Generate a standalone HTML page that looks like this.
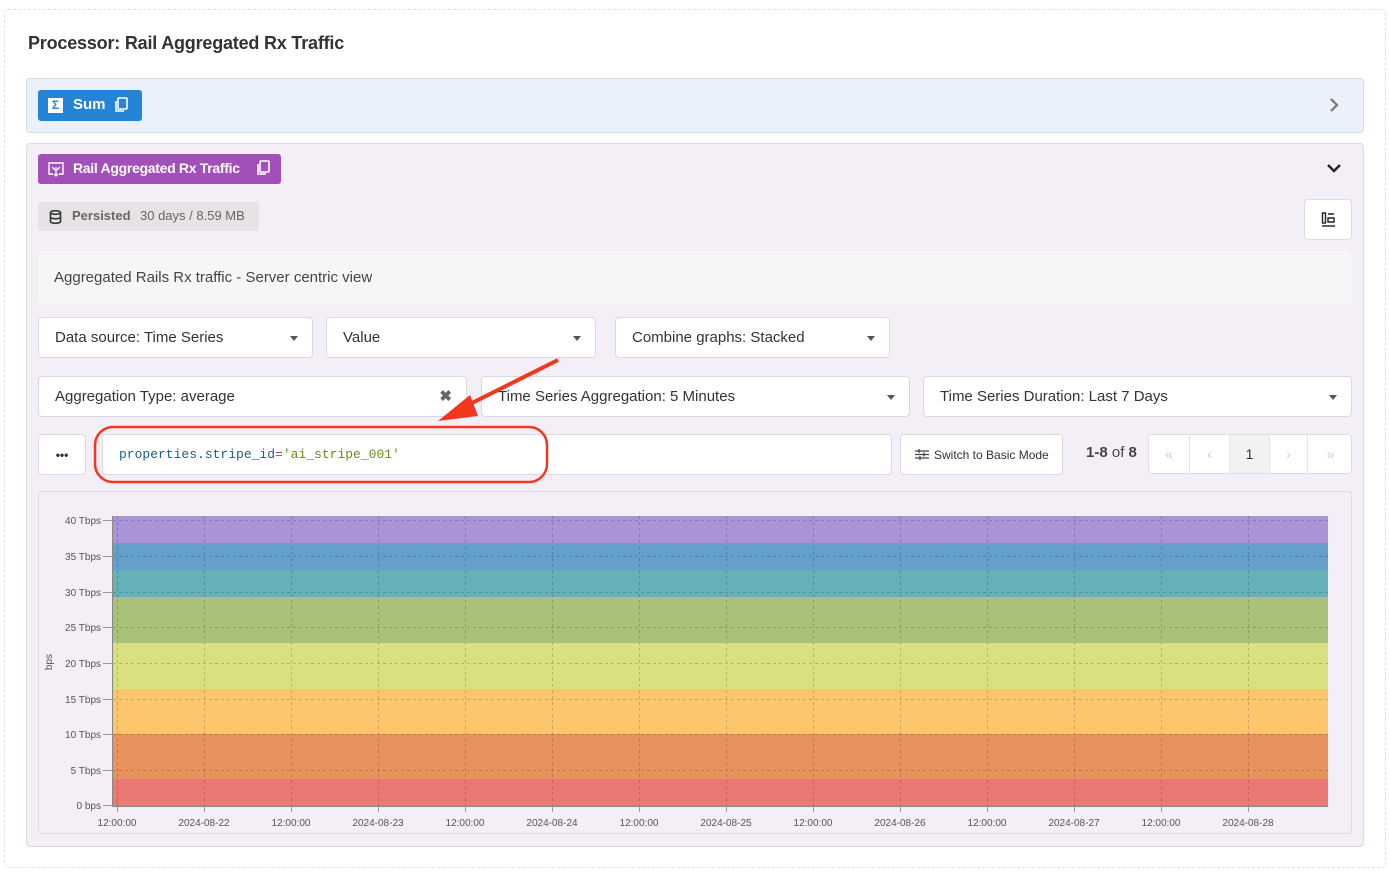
<!DOCTYPE html>
<html><head><meta charset="utf-8">
<style>
*{box-sizing:border-box;margin:0;padding:0}
body{width:1390px;height:876px;background:#fff;font-family:"Liberation Sans",sans-serif;color:#333;position:relative;overflow:hidden}
.a{position:absolute}
.box{position:absolute;background:#fff;border:1px solid #dcd8e0;border-radius:4px;font-size:15px;color:#333;display:flex;align-items:center;padding-left:16px}
.caret{position:absolute;right:14px;top:50%;margin-top:-2px;width:0;height:0;border-left:4px solid transparent;border-right:4px solid transparent;border-top:5px solid #555}
.pg{position:absolute;top:0;height:38px;border-right:1px solid #e5e5e5;display:flex;align-items:center;justify-content:center;color:#ccc;font-size:14px}
</style></head><body>
<div class="a" style="left:4px;top:9px;width:1382px;height:859px;border:1px dashed #e2e2e2;border-radius:4px"></div>
<div class="a" style="left:28px;top:33px;font-size:18px;font-weight:bold;color:#333;letter-spacing:-0.2px">Processor: Rail Aggregated Rx Traffic</div>

<div class="a" style="left:26px;top:78px;width:1338px;height:55px;background:#ebf1fa;border:1px solid #d5dce6;border-radius:4px"></div>
<div class="a" style="left:38px;top:90px;width:104px;height:31px;background:#2584d6;border-radius:3px;color:#fff;font-size:15px;font-weight:bold">
 <div class="a" style="left:10px;top:8px;width:15px;height:15px;background:#fff;color:#2584d6;font-size:12px;text-align:center;line-height:15px">Σ</div>
 <div class="a" style="left:35px;top:6px">Sum</div>
 <svg class="a" style="left:76px;top:7px" width="14" height="16" viewBox="0 0 14 16" fill="none" stroke="#fff" stroke-width="1.6"><rect x="4" y="1" width="9" height="11" rx="1"/><path d="M2 4v10h8"/></svg>
</div>
<svg class="a" style="left:1328px;top:98px" width="12" height="14" viewBox="0 0 12 14"><path d="M3 1l6 6-6 6" stroke="#777" stroke-width="2.2" fill="none"/></svg>

<div class="a" style="left:26px;top:143px;width:1338px;height:704px;background:#f4eef6;border:1px solid #e0dae4;border-radius:4px"></div>
<div class="a" style="left:38px;top:154px;width:243px;height:30px;background:#a34fb9;border-radius:3px;color:#fff;font-size:14px;font-weight:bold">
 <svg class="a" style="left:9px;top:7px" width="18" height="16" viewBox="0 0 18 16" fill="none" stroke="#fff" stroke-width="1.4"><path d="M6 13H2V2h14v11h-4M5 6l3 3M13 6l-3 3M9 6v9M7 13l2 2 2-2"/></svg>
 <div class="a" style="left:35px;top:6px;letter-spacing:-0.3px">Rail Aggregated Rx Traffic</div>
 <svg class="a" style="left:218px;top:6px" width="14" height="16" viewBox="0 0 14 16" fill="none" stroke="#fff" stroke-width="1.6"><rect x="4" y="1" width="9" height="11" rx="1"/><path d="M2 4v10h8"/></svg>
</div>
<svg class="a" style="left:1326px;top:162px" width="16" height="12" viewBox="0 0 16 12"><path d="M2 3l6 6 6-6" stroke="#222" stroke-width="2.4" fill="none"/></svg>

<div class="a" style="left:38px;top:202px;width:221px;height:29px;background:#e6e2e6;border-radius:3px;font-size:13px;color:#666">
 <svg class="a" style="left:11px;top:8px" width="13" height="14" viewBox="0 0 13 14" fill="none" stroke="#333" stroke-width="1.6"><ellipse cx="6.5" cy="2.5" rx="5" ry="1.8"/><path d="M1.5 2.5v9c0 1 2.2 1.8 5 1.8s5-.8 5-1.8v-9M1.5 7c0 1 2.2 1.8 5 1.8s5-.8 5-1.8"/></svg>
 <div class="a" style="left:34px;top:6px;font-weight:bold">Persisted</div>
 <div class="a" style="left:102px;top:6px">30 days / 8.59 MB</div>
</div>
<div class="a" style="left:1304px;top:199px;width:48px;height:41px;background:#fff;border:1px solid #ddd;border-radius:4px">
 <svg class="a" style="left:16px;top:12px" width="15" height="15" viewBox="0 0 15 15" fill="none" stroke="#222" stroke-width="1.4"><path d="M1 14h13"/><rect x="1.5" y="1" width="3" height="10"/><path d="M7 2h6M7 6h6v4H7z"/></svg>
</div>
<div class="a" style="left:38px;top:251px;width:1314px;height:53px;background:#f7f6f7;border-radius:4px;font-size:15px;color:#444;padding:18px 0 0 16px">Aggregated Rails Rx traffic - Server centric view</div>

<div class="box" style="left:38px;top:317px;width:275px;height:41px">Data source: Time Series<i class="caret"></i></div>
<div class="box" style="left:326px;top:317px;width:270px;height:41px">Value<i class="caret"></i></div>
<div class="box" style="left:615px;top:317px;width:275px;height:41px">Combine graphs: Stacked<i class="caret"></i></div>

<div class="box" style="left:38px;top:376px;width:429px;height:41px">Aggregation Type: average<span class="a" style="right:14px;top:10px;font-size:15px;color:#666;font-weight:bold">✖</span></div>
<div class="box" style="left:481px;top:376px;width:429px;height:41px">Time Series Aggregation: 5 Minutes<i class="caret"></i></div>
<div class="box" style="left:923px;top:376px;width:429px;height:41px">Time Series Duration: Last 7 Days<i class="caret"></i></div>

<div class="box" style="left:38px;top:434px;width:48px;height:41px;padding:0;justify-content:center;font-size:12px;font-weight:bold">•••</div>
<div class="box" style="left:102px;top:434px;width:790px;height:41px;font-family:'Liberation Mono',monospace;font-size:13px"><span style="color:#1f5a8a">properties.stripe_id</span><span style="color:#a23b9c">=</span><span style="color:#6a8a1e">'ai_stripe_001'</span></div>
<div class="box" style="left:900px;top:434px;width:163px;height:41px;font-size:12px;padding-left:14px">
 <svg width="14" height="11" viewBox="0 0 14 11" stroke="#444" stroke-width="1.3" style="margin-right:5px"><path d="M0 2h14M0 5.5h14M0 9h14M4 0v4M9 3.5v4M5 7v4"/></svg>Switch to Basic Mode</div>
<div class="a" style="left:1086px;top:444px;font-size:15px;font-weight:bold;color:#444">1-8 <span style="font-weight:normal">of</span> 8</div>
<div class="a" style="left:1148px;top:434px;width:204px;height:40px;background:#fff;border:1px solid #ddd;border-radius:4px;overflow:hidden">
 <div class="pg" style="left:0;width:41px">«</div>
 <div class="pg" style="left:41px;width:40px">‹</div>
 <div class="pg" style="left:81px;width:40px;background:#f2f2f2;color:#333">1</div>
 <div class="pg" style="left:121px;width:38px">›</div>
 <div class="pg" style="left:159px;width:45px;border:none">»</div>
</div>

<div class="a" style="left:38px;top:491px;width:1314px;height:343px;border:1px solid #e0dbe3;border-radius:4px"></div>

<svg class="a" style="left:0;top:0" width="1390" height="876" font-family="Liberation Sans, sans-serif" font-size="10" fill="#555">
 <rect x="113" y="516" width="1215" height="27" fill="#aa93d6"/>
 <rect x="113" y="543" width="1215" height="27" fill="#65a0cb"/>
 <rect x="113" y="570" width="1215" height="27" fill="#66b0b8"/>
 <rect x="113" y="597" width="1215" height="46" fill="#a9c279"/>
 <rect x="113" y="643" width="1215" height="46" fill="#dae07f"/>
 <rect x="113" y="689" width="1215" height="45" fill="#fdc66c"/>
 <rect x="113" y="734" width="1215" height="45" fill="#e8935e"/>
 <rect x="113" y="779" width="1215" height="27" fill="#ec7873"/>
 <g stroke="#000" stroke-opacity=".18" stroke-dasharray="3 3" stroke-width="1">
  <path d="M113 520.5H1328M113 556.5H1328M113 592.5H1328M113 627.5H1328M113 663.5H1328M113 699.5H1328M113 734.5H1328M113 770.5H1328"/>
  <path d="M117.5 516V806M204.5 516V806M291.5 516V806M378.5 516V806M465.5 516V806M552.5 516V806M639.5 516V806M726.5 516V806M813.5 516V806M900.5 516V806M987.5 516V806M1074.5 516V806M1161.5 516V806M1248.5 516V806"/>
 </g>
 <path d="M112.5 516V806.5H1328" stroke="#888" fill="none"/>
 <g stroke="#999"><path d="M103 520.5h10M103 556.5h10M103 592.5h10M103 627.5h10M103 663.5h10M103 699.5h10M103 734.5h10M103 770.5h10M103 805.5h10"/>
 <path d="M117.5 806v6M204.5 806v6M291.5 806v6M378.5 806v6M465.5 806v6M552.5 806v6M639.5 806v6M726.5 806v6M813.5 806v6M900.5 806v6M987.5 806v6M1074.5 806v6M1161.5 806v6M1248.5 806v6"/></g>
 <g text-anchor="end"><text x="101" y="524">40 Tbps</text><text x="101" y="560">35 Tbps</text><text x="101" y="596">30 Tbps</text><text x="101" y="631">25 Tbps</text><text x="101" y="667">20 Tbps</text><text x="101" y="703">15 Tbps</text><text x="101" y="738">10 Tbps</text><text x="101" y="774">5 Tbps</text><text x="101" y="809">0 bps</text></g>
 <text transform="translate(52,662) rotate(-90)" text-anchor="middle">bps</text>
 <g text-anchor="middle"><text x="117" y="826">12:00:00</text><text x="204" y="826">2024-08-22</text><text x="291" y="826">12:00:00</text><text x="378" y="826">2024-08-23</text><text x="465" y="826">12:00:00</text><text x="552" y="826">2024-08-24</text><text x="639" y="826">12:00:00</text><text x="726" y="826">2024-08-25</text><text x="813" y="826">12:00:00</text><text x="900" y="826">2024-08-26</text><text x="987" y="826">12:00:00</text><text x="1074" y="826">2024-08-27</text><text x="1161" y="826">12:00:00</text><text x="1248" y="826">2024-08-28</text></g>
 <rect x="95" y="427" width="452" height="55" rx="18" fill="none" stroke="#f2371e" stroke-width="2.5"/>
 <path d="M558 360L462 408" stroke="#f2371e" stroke-width="4"/>
 <path d="M438 421L470 395L478 416Z" fill="#f2371e"/>
</svg>
</body></html>
